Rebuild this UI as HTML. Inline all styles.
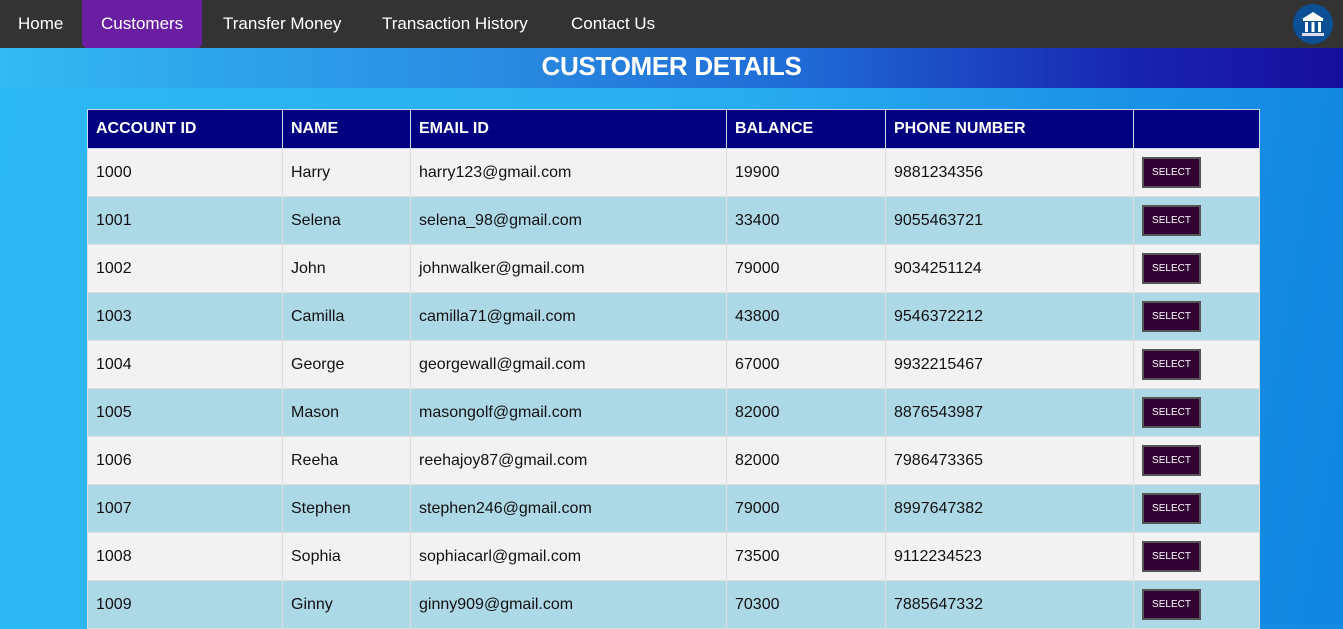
<!DOCTYPE html>
<html><head><style>
*{margin:0;padding:0;box-sizing:border-box}
body{width:1343px;height:624px;overflow:hidden;font-family:"Liberation Sans",sans-serif;background:linear-gradient(100deg,#2cb8f2 0%,#2aaef0 50%,#1a90e6 80%,#0f86e0 100%);position:relative}
.nav{height:48px;background:#333;position:relative}
.nav a{position:absolute;top:0;height:48px;line-height:48px;color:#fff;font-size:17px;text-decoration:none}
.nav .act{background:#6a1fa3;border-radius:0 0 5px 5px;padding:0 19px}
.logo{position:absolute;left:1293px;top:4px;width:40px;height:40px;border-radius:50%;background:#0c4f94}
.band{position:absolute;top:48px;left:0;width:1343px;height:40px;background:linear-gradient(90deg,rgba(255,255,255,0.03) 0%,#2a8ee2 35%,#1f6ad6 60%,#1722ae 85%,#180e9e 100%)}
.band h1{text-align:center;color:#fff;font-size:26px;line-height:36px;font-weight:bold;letter-spacing:-0.3px}
table{position:absolute;left:87px;top:109px;width:1173px;border-collapse:collapse}
td,th{border:1px solid #ddd;text-align:left;padding:0 8px;font-size:16px;color:#111}
th{background:#000080;color:#fff;height:39px;border-color:#c8dcef;font-weight:bold}
td{height:48px}
tr:nth-child(even) td{background:#f2f2f2}
tr:nth-child(odd) td{background:#add8e6}
.b{display:inline-block;width:59px;height:31px;background:#320235;border:2px solid #555;color:#fff;font-size:10px;line-height:27px;text-align:center}
</style></head><body>
<div class="nav">
<a style="left:18px">Home</a>
<a class="act" style="left:82px">Customers</a>
<a style="left:223px">Transfer Money</a>
<a style="left:382px">Transaction History</a>
<a style="left:571px">Contact Us</a>
<div class="logo"><svg width="40" height="40" viewBox="0 0 40 40"><path d="M20 8 L31 15 L9 15 Z" fill="#fff"/><rect x="10" y="15" width="20" height="2" fill="#fff"/><rect x="12" y="18" width="3" height="10" fill="#fff"/><rect x="18.5" y="18" width="3" height="10" fill="#fff"/><rect x="25" y="18" width="3" height="10" fill="#fff"/><rect x="9" y="29" width="22" height="3" fill="#dde"/></svg></div>
</div>
<div class="band"><h1>CUSTOMER DETAILS</h1></div>
<table>
<tr><th style="width:195px">ACCOUNT ID</th><th style="width:128px">NAME</th><th style="width:316px">EMAIL ID</th><th style="width:159px">BALANCE</th><th style="width:248px">PHONE NUMBER</th><th></th></tr>
<tr><td>1000</td><td>Harry</td><td>harry123@gmail.com</td><td>19900</td><td>9881234356</td><td><span class="b">SELECT</span></td></tr>
<tr><td>1001</td><td>Selena</td><td>selena_98@gmail.com</td><td>33400</td><td>9055463721</td><td><span class="b">SELECT</span></td></tr>
<tr><td>1002</td><td>John</td><td>johnwalker@gmail.com</td><td>79000</td><td>9034251124</td><td><span class="b">SELECT</span></td></tr>
<tr><td>1003</td><td>Camilla</td><td>camilla71@gmail.com</td><td>43800</td><td>9546372212</td><td><span class="b">SELECT</span></td></tr>
<tr><td>1004</td><td>George</td><td>georgewall@gmail.com</td><td>67000</td><td>9932215467</td><td><span class="b">SELECT</span></td></tr>
<tr><td>1005</td><td>Mason</td><td>masongolf@gmail.com</td><td>82000</td><td>8876543987</td><td><span class="b">SELECT</span></td></tr>
<tr><td>1006</td><td>Reeha</td><td>reehajoy87@gmail.com</td><td>82000</td><td>7986473365</td><td><span class="b">SELECT</span></td></tr>
<tr><td>1007</td><td>Stephen</td><td>stephen246@gmail.com</td><td>79000</td><td>8997647382</td><td><span class="b">SELECT</span></td></tr>
<tr><td>1008</td><td>Sophia</td><td>sophiacarl@gmail.com</td><td>73500</td><td>9112234523</td><td><span class="b">SELECT</span></td></tr>
<tr><td>1009</td><td>Ginny</td><td>ginny909@gmail.com</td><td>70300</td><td>7885647332</td><td><span class="b">SELECT</span></td></tr>
</table>
</body></html>
